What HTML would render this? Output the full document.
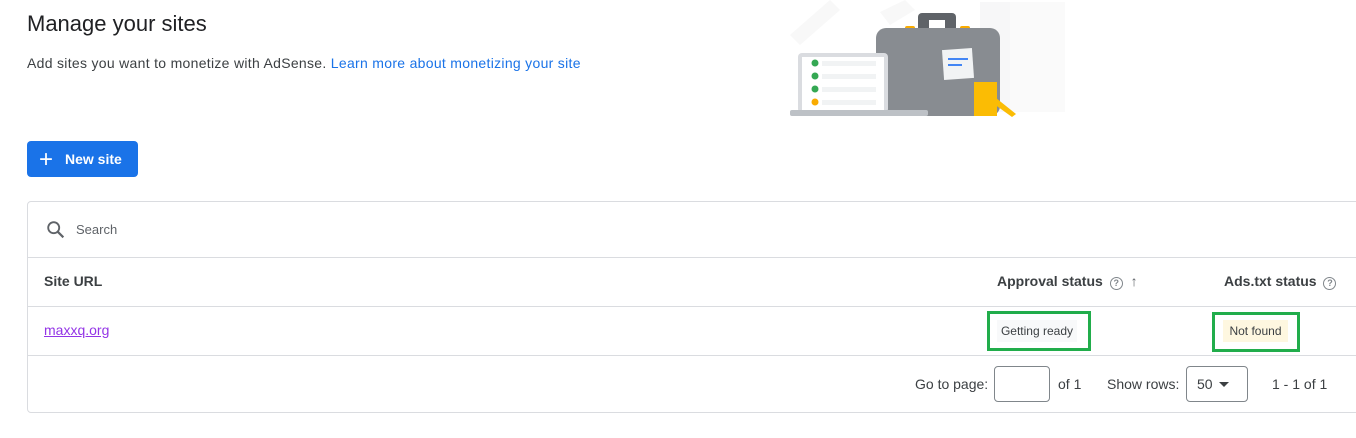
<!DOCTYPE html><html><head><style>
body{margin:0;width:1356px;height:438px;background:#fff;font-family:"Liberation Sans",Arial,sans-serif;color:#202124;position:relative;overflow:hidden}
.a{position:absolute}
</style></head><body>
<div class="a" style="left:27px;top:11px;font-size:22px;color:#202124">Manage your sites</div>
<div class="a" style="left:27px;top:55px;font-size:14px;color:#3c4043;letter-spacing:0.3px">Add sites you want to monetize with AdSense. <span style="color:#1a73e8">Learn more about monetizing your site</span></div>
<svg class="a" style="left:780px;top:0" width="300" height="125">
<rect x="200" y="2" width="60" height="110" fill="#f7f7f8"/>
<rect x="230" y="2" width="55" height="110" fill="#fafafa"/>
<path d="M10 35 L50 0 L60 10 L20 45Z" fill="#f8f8f8"/>
<path d="M100 12 L125 0 L135 10 L110 25Z" fill="#f8f8f8"/>
<rect x="138" y="13" width="38" height="20" rx="4" fill="#5f6368"/>
<rect x="149" y="20" width="16" height="13" fill="#fff"/>
<rect x="125" y="26" width="10" height="4" rx="2" fill="#f9ab00"/>
<rect x="180" y="26" width="10" height="4" rx="2" fill="#f9ab00"/>
<rect x="96" y="28" width="124" height="88" rx="10" fill="#888c91"/>
<rect x="163" y="49" width="30" height="30" fill="#f1f3f4" transform="rotate(-4 178 64)"/>
<rect x="168" y="58" width="20" height="2" fill="#4285f4"/><rect x="168" y="64" width="14" height="2" fill="#4285f4"/>
<rect x="18" y="53" width="90" height="60" rx="4" fill="#dadce0"/>
<rect x="22" y="57" width="82" height="54" fill="#fff"/>
<rect x="10" y="110" width="138" height="6" rx="2" fill="#bdc1c6"/>
<circle cx="35" cy="63" r="3.5" fill="#34a853"/><rect x="42" y="61" width="54" height="5" fill="#f1f3f4"/>
<circle cx="35" cy="76" r="3.5" fill="#34a853"/><rect x="42" y="74" width="54" height="5" fill="#f1f3f4"/>
<circle cx="35" cy="89" r="3.5" fill="#34a853"/><rect x="42" y="87" width="54" height="5" fill="#f1f3f4"/>
<circle cx="35" cy="102" r="3.5" fill="#f9ab00"/><rect x="42" y="100" width="54" height="5" fill="#f1f3f4"/>
<rect x="194" y="82" width="23" height="34" fill="#fbbc04"/>
<path d="M216 98 L236 114 L232 117 L214 104Z" fill="#fbbc04"/>
</svg>
<div class="a" style="left:27px;top:141px;width:111px;height:36px;background:#1a73e8;border-radius:4px;color:#fff;font-size:14px;font-weight:bold;line-height:36px"><span style="position:absolute;left:12px;top:1px;font-size:24px;font-weight:normal">+</span><span style="position:absolute;left:38px">New site</span></div>
<div class="a" style="left:27px;top:201px;width:1340px;height:210px;border:1px solid #dadce0;border-radius:4px"></div>
<svg class="a" style="left:45px;top:219px" width="22" height="22" viewBox="0 0 24 24"><circle cx="9.5" cy="9.5" r="6" fill="none" stroke="#5f6368" stroke-width="2"/><path d="M14 14 L20 20" stroke="#5f6368" stroke-width="2.4"/></svg>
<div class="a" style="left:76px;top:222px;font-size:13px;color:#5f6368">Search</div>
<div class="a" style="left:28px;top:257px;width:1340px;border-top:1px solid #dadce0"></div>
<div class="a" style="left:28px;top:306px;width:1340px;border-top:1px solid #dadce0"></div>
<div class="a" style="left:28px;top:355px;width:1340px;border-top:1px solid #dadce0"></div>
<div class="a" style="left:44px;top:273px;font-size:14px;font-weight:bold;color:#3c4043">Site URL</div>
<div class="a" style="left:997px;top:273px;font-size:14px;font-weight:bold;color:#3c4043">Approval status <span style="display:inline-block;width:11px;height:11px;border:1.3px solid #80868b;border-radius:50%;font-size:9px;line-height:11px;text-align:center;color:#80868b;margin-left:3px">?</span> <span style="font-weight:normal;color:#5f6368;margin-left:4px">↑</span></div>
<div class="a" style="left:1224px;top:273px;font-size:14px;font-weight:bold;color:#3c4043">Ads.txt status <span style="display:inline-block;width:11px;height:11px;border:1.3px solid #80868b;border-radius:50%;font-size:9px;line-height:11px;text-align:center;color:#80868b;margin-left:3px">?</span></div>
<div class="a" style="left:44px;top:322px;font-size:14px;color:#9334e6;text-decoration:underline">maxxq.org</div>
<div class="a" style="left:987px;top:311px;width:98px;height:34px;border:3px solid #21ad4b"></div>
<div class="a" style="left:997px;top:320px;width:80px;height:22px;background:#f8f9fa;font-size:12px;line-height:22px;text-align:center;color:#3c4043">Getting ready</div>
<div class="a" style="left:1212px;top:312px;width:82px;height:34px;border:3px solid #21ad4b"></div>
<div class="a" style="left:1223px;top:320px;width:65px;height:22px;background:#fef7e0;font-size:12px;line-height:22px;text-align:center;color:#3c4043">Not found</div>
<div class="a" style="left:915px;top:376px;font-size:14px;color:#3c4043">Go to page:</div>
<div class="a" style="left:994px;top:366px;width:54px;height:34px;border:1px solid #80868b;border-radius:4px"></div>
<div class="a" style="left:1058px;top:376px;font-size:14px;color:#3c4043">of 1</div>
<div class="a" style="left:1107px;top:376px;font-size:14px;color:#3c4043">Show rows:</div>
<div class="a" style="left:1186px;top:366px;width:60px;height:34px;border:1px solid #80868b;border-radius:4px"></div>
<div class="a" style="left:1197px;top:376px;font-size:14px;color:#3c4043">50</div>
<div class="a" style="left:1219px;top:382px;width:0;height:0;border-left:5px solid transparent;border-right:5px solid transparent;border-top:5px solid #3c4043"></div>
<div class="a" style="left:1272px;top:376px;font-size:14px;color:#3c4043">1 - 1 of 1</div>
</body></html>
